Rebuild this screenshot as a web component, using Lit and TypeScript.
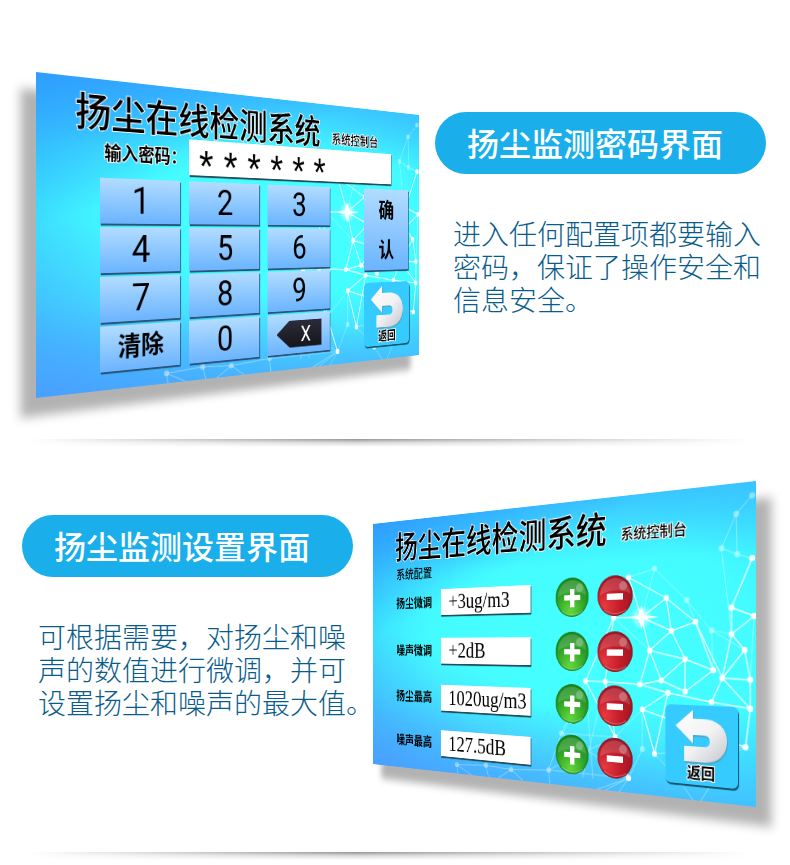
import { LitElement, html, svg, css } from "lit";
import { customElement, property } from "lit/decorators.js";

type Point = [number, number];

const NODES: Point[] = [
  [398, 90], [430, 82], [444, 114], [468, 117], [414, 134], [379, 134], [450, 149], [478, 140],
  [496, 149], [424, 170], [540, 77], [518, 126], [542, 135], [518, 153], [532, 169], [523, 31],
  [540, 14], [507, 65], [524, 72], [466, 179], [498, 190], [508, 198], [538, 199], [438, 202],
  [466, 213], [412, 207], [368, 205], [342, 205], [446, 215], [415, 234], [496, 223], [538, 228],
  [430, 281], [533, 267], [381, 266], [398, 310], [415, 277], [461, 309], [150, 315], [197, 312],
  [236, 314], [291, 310], [309, 266],
];
const DIM = new Set([1, 3, 8, 15, 16, 17, 18, 36, 38, 39, 40, 41, 42]);
const BRIGHT_EDGES: Point[] = [
  [0, 2], [0, 4], [2, 4], [2, 6], [2, 7], [4, 5], [4, 6], [4, 9], [6, 7], [6, 9], [6, 19], [7, 20],
  [9, 19], [19, 20], [9, 23], [19, 23], [20, 24], [19, 24], [23, 24], [23, 25], [5, 27], [5, 26],
  [10, 11], [11, 12], [11, 13], [13, 12], [13, 14], [13, 21], [14, 21], [14, 22], [21, 22], [21, 30],
  [21, 31], [22, 31], [28, 29], [28, 30], [30, 31], [29, 32], [28, 32], [26, 34], [27, 26], [26, 25],
  [34, 35], [34, 27], [31, 33], [29, 33], [25, 28], [7, 21], [9, 25],
];
const DIM_EDGES: Point[] = [
  [1, 0], [1, 3], [3, 7], [8, 13], [8, 14], [15, 16], [15, 17], [15, 18], [17, 18], [3, 8], [5, 9],
  [8, 20], [29, 36], [36, 35], [32, 37], [37, 33], [34, 29], [41, 34], [38, 39], [39, 40], [40, 41],
  [41, 42], [42, 27], [41, 35], [42, 34], [1, 4], [17, 13], [10, 18], [12, 22], [33, 32], [35, 42],
];

const segment = ([a, b]: Point) =>
  svg`<line x1=${NODES[a][0]} y1=${NODES[a][1]} x2=${NODES[b][0]} y2=${NODES[b][1]}></line>`;

const network = html`
  <svg class="network" viewBox="0 0 544 326" preserveAspectRatio="none" aria-hidden="true">
    <defs>
      <radialGradient id="glow">
        <stop offset="0" stop-color="#fff"></stop>
        <stop offset="0.3" stop-color="#fff" stop-opacity="0.6"></stop>
        <stop offset="1" stop-color="#fff" stop-opacity="0"></stop>
      </radialGradient>
    </defs>
    <g stroke="#fff" stroke-width="1" opacity="0.4">
      ${DIM_EDGES.map(segment)}
      <path d="M150 315l24 11M150 315l2 11M197 312l4 14M236 314l18 12M236 314l-20 12M291 310l2 16M398 310l-40 16M398 310l-30 16M398 310l-12 16M461 309l14 17M498 304l-14 22M342 205l-30 60M342 205l10 110M368 205l-30 110" fill="none"></path>
    </g>
    <g stroke="#fff" stroke-width="1.4" opacity="0.85">${BRIGHT_EDGES.map(segment)}</g>
    <g fill="#fff">
      ${NODES.map(([x, y], i) => svg`<circle cx=${x} cy=${y} r="3.2" opacity=${DIM.has(i) ? 0.4 : 0.95}></circle>`)}
    </g>
    <circle cx="414" cy="134" r="14" fill="url(#glow)"></circle>
    <path d="M394 134l16-2 4-10 4 10 18 2-18 2-4 10-4-10z" fill="#fff"></path>
  </svg>
`;

const panelText = css`
  * { box-sizing: border-box; }
  button, input { margin: 0; border: 0; font: inherit; color: inherit; }
  button { padding: 0; cursor: pointer; }
`;

/** Console screen drawn as a tilted board; its content sits in the default slot. */
@customElement("console-screen")
export class ConsoleScreen extends LitElement {
  @property({ reflect: true }) tilt: "left" | "right" = "left";

  static styles = [
    panelText,
    css`
      :host { display: flex; width: 383px; height: 326px; }
      :host([tilt="right"]) { justify-content: flex-end; }
      .board {
        position: relative;
        flex: none;
        width: 544px;
        height: 326px;
        transform-origin: left center;
        transform: perspective(444px) rotateY(17deg);
        box-shadow: -16px 18px 10px rgb(0 0 0 / 0.3);
        outline: 1px solid transparent;
        background:
          linear-gradient(160deg, rgb(44 150 255 / 0.8), rgb(50 180 255 / 0) 30%),
          linear-gradient(to bottom, rgb(56 180 255 / 0.65), rgb(50 200 255 / 0) 22%),
          radial-gradient(ellipse 84% 80% at 60% 50%, #46ffff 0, #44fcff 48%, #3adcff 80%, #38d0ff 100%);
        color: #000;
      }
      :host([tilt="right"]) .board {
        transform-origin: right center;
        transform: perspective(444px) rotateY(-17deg);
        box-shadow: 16px 18px 10px rgb(0 0 0 / 0.3);
      }
      .board::before {
        content: "";
        position: absolute;
        inset: 0;
        background:
          linear-gradient(20deg, rgb(76 150 255 / 0.75), rgb(74 180 255 / 0) 38%),
          linear-gradient(to top, rgb(70 176 255 / 0.6), rgb(74 200 255 / 0) 28%);
      }
      .network { position: absolute; inset: 0; width: 100%; height: 100%; }
      .content { position: relative; height: 100%; }
      header { display: flex; align-items: center; gap: 18px; padding: 8px 0 0 42px; }
      h3, p { margin: 0; font-weight: 500; -webkit-text-stroke: 2px #fff; paint-order: stroke fill; }
      h3 { font-size: 41px; line-height: 48px; }
      p { padding-top: 18px; font-size: 16px; line-height: 20px; }
    `,
  ];

  render() {
    return html`
      <div class="board">
        ${network}
        <div class="content">
          <header>
            <h3>扬尘在线检测系统</h3>
            <p>系统控制台</p>
          </header>
          <slot></slot>
        </div>
      </div>
    `;
  }
}

@customElement("return-button")
export class ReturnButton extends LitElement {
  static styles = [
    panelText,
    css`
      :host { display: block; }
      button {
        display: flex;
        flex-direction: column;
        align-items: center;
        width: 82px;
        height: 83px;
        padding-top: 5px;
        border-radius: 6px;
        background: #36cbff;
        box-shadow: 1px 2px 1px #17506a;
      }
      svg { display: block; width: 62px; height: 56px; }
      span {
        font-size: 16px;
        font-weight: 700;
        line-height: 16px;
        -webkit-text-stroke: 2px #fff;
        paint-order: stroke fill;
      }
    `,
  ];

  render() {
    return html`
      <button type="button">
        <svg viewBox="0 0 62 56" aria-hidden="true">
          <defs>
            <linearGradient id="metal" x1="0" y1="0" x2="1" y2="1">
              <stop offset="0" stop-color="#fff"></stop>
              <stop offset="0.55" stop-color="#f2f2f4"></stop>
              <stop offset="1" stop-color="#c4c6cc"></stop>
            </linearGradient>
          </defs>
          <path d="M3 18L22 1v9h12c17 0 26 9 26 22S51 55 34 55H12V39h22c5 0 7-2 7-6s-2-6-7-6H22v9z" transform="translate(1 1)" fill="#6b8b98" opacity="0.5"></path>
          <path d="M2 17L22 0v9h12c17 0 26 9 26 22S51 54 34 54H12V38h22c5 0 7-2 7-6s-2-6-7-6H22v9z" fill="url(#metal)"></path>
        </svg>
        <span>返回</span>
      </button>
    `;
  }
}

@customElement("password-pad")
export class PasswordPad extends LitElement {
  static styles = [
    panelText,
    css`
      :host { display: block; }
      .entry { display: flex; align-items: center; padding-left: 75px; }
      label {
        width: 104px;
        font-size: 20px;
        font-weight: 700;
        line-height: 40px;
        -webkit-text-stroke: 2px #fff;
        paint-order: stroke fill;
        white-space: nowrap;
      }
      input {
        width: 312px;
        height: 40px;
        padding: 20px 0 0 13px;
        background: #fff;
        box-shadow: 1px 2px 1px #205060;
        font-family: "Liberation Sans", sans-serif;
        font-size: 50px;
      }
      .keys { display: flex; padding: 7px 0 0 70px; }
      .pad { display: grid; grid-template-columns: repeat(3, 97px); grid-auto-rows: 48px; gap: 4px 12px; }
      .key {
        display: grid;
        place-items: center;
        background: linear-gradient(#b2dcff, #6bb4ff);
        box-shadow: 1px 2px 1px #2a5578;
        font-family: Roboto, "Noto Sans CJK SC", sans-serif;
        font-size: 40px;
        line-height: 48px;
      }
      .word { font-size: 28px; font-weight: 700; }
      .erase {
        width: 70px;
        height: 33px;
        padding-left: 20px;
        background: linear-gradient(#2c2b3a, #15151c);
        clip-path: polygon(0 50%, 20px 0, 100% 0, 100% 100%, 20px 100%);
        color: #fff;
        font-size: 26px;
        line-height: 34px;
      }
      .side { display: flex; flex-direction: column; gap: 16px; padding-left: 58px; }
      .confirm { width: 80px; height: 106px; padding: 3px 26px 0; line-height: 52px; }
    `,
  ];

  render() {
    return html`
      <div class="entry">
        <label for="code">输入密码：</label>
        <input id="code" value="* * * * * *" />
      </div>
      <div class="keys">
        <div class="pad">
          ${[1, 2, 3, 4, 5, 6, 7, 8, 9].map((n) => html`<button class="key" type="button">${n}</button>`)}
          <button class="key word" type="button">清除</button>
          <button class="key" type="button">0</button>
          <button class="key" type="button"><span class="erase">X</span></button>
        </div>
        <div class="side">
          <button class="key word confirm" type="button">确认</button>
          <return-button></return-button>
        </div>
      </div>
    `;
  }
}

const SETTINGS = [
  { id: "dust-trim", label: "扬尘微调", value: "+3ug/m3" },
  { id: "noise-trim", label: "噪声微调", value: "+2dB" },
  { id: "dust-max", label: "扬尘最高", value: "1020ug/m3" },
  { id: "noise-max", label: "噪声最高", value: "127.5dB" },
];

@customElement("settings-form")
export class SettingsForm extends LitElement {
  static styles = [
    panelText,
    css`
      :host { display: block; padding-left: 44px; }
      h4, label { margin: 0; font-size: 16px; font-weight: 700; }
      h4 { line-height: 24px; padding-top: 2px; font-weight: 500; }
      .body { display: flex; align-items: flex-end; padding-top: 5px; }
      .rows { display: grid; grid-template-rows: 62px 60px 58px 34px; width: 399px; }
      .row { display: grid; grid-template-columns: 79px 142px 36px 45px 12px 45px; align-items: center; height: 34px; }
      label { padding-bottom: 4px; line-height: 28px; }
      input {
        width: 142px;
        height: 33px;
        padding: 0 0 0 13px;
        background: #fff;
        box-shadow: 1px 2px 1px #205060;
        font-family: "Liberation Serif", serif;
        font-size: 27px;
      }
      .step { width: 45px; height: 45px; border-radius: 50%; }
      .step svg { display: block; width: 100%; height: 100%; }
      .plus { grid-column: 4; background: radial-gradient(circle at 45% 85%, #62d83c, #2a9e26 50%, #137a1c); box-shadow: inset 0 0 2px 1px #187a20; }
      .minus { grid-column: 6; background: radial-gradient(circle at 20% 75%, #e83a40, #c01a28 45%, #8c1420); box-shadow: inset 0 0 2px 1px #7c1820; }
      return-button { margin: 0 0 -9px; }
    `,
  ];

  private step(kind: "plus" | "minus", label: string) {
    return html`
      <button class="step ${kind}" type="button" aria-label="${label} ${kind === "plus" ? "+" : "−"}">
        <svg viewBox="0 0 45 45" aria-hidden="true">
          <path d="M3 22C4 10 12 3 23 3s19 8 19 18C32 15 14 15 3 22z" fill="#fff" opacity="0.16"></path>
          <circle cx="33" cy="12" r="5" fill="#fff" opacity="0.25"></circle>
          <path d="M9 38c8 6 20 6 28 0" fill="none" stroke="#fff" opacity="0.35"></path>
          <path d=${kind === "plus" ? "M20 13h6v7h8v6h-8v8h-6v-8h-8v-6h8z" : "M12 20h21v7H12z"} fill="#fff"></path>
        </svg>
      </button>
    `;
  }

  render() {
    return html`
      <h4>系统配置</h4>
      <div class="body">
        <div class="rows">
          ${SETTINGS.map(
            (s) => html`
              <div class="row">
                <label for=${s.id}>${s.label}</label>
                <input id=${s.id} .value=${s.value} />
                ${this.step("plus", s.label)} ${this.step("minus", s.label)}
              </div>
            `,
          )}
        </div>
        <return-button></return-button>
      </div>
    `;
  }
}

@customElement("app-root")
export class AppRoot extends LitElement {
  static styles = css`
    :host {
      display: block;
      background: #fff;
      font-family: "Noto Sans CJK SC", sans-serif;
    }
    * { box-sizing: border-box; }
    section { display: grid; }
    .password { grid-template-columns: 383px 1fr; gap: 16px; padding: 72px 24px 0 36px; }
    .settings { grid-template-columns: 1fr 383px; gap: 20px; padding: 34px 34px 4px 22px; }
    .copy { min-width: 0; padding-top: 40px; }
    .settings .copy { padding-top: 34px; }
    h2 {
      margin: 0;
      padding: 0 0 2px 32px;
      max-width: 331px;
      border-radius: 31px;
      background: #1aaeea;
      color: #fff;
      font-size: 32px;
      font-weight: 500;
      line-height: 60px;
      white-space: nowrap;
    }
    .copy p {
      margin: 0;
      padding: 43px 0 0 18px;
      color: #0a5c8a;
      font-size: 28px;
      font-weight: 300;
      line-height: 33px;
      white-space: nowrap;
    }
    .settings .copy p { padding-left: 16px; }
    hr {
      height: 8px;
      margin: 41px 40px 0 30px;
      border: 0;
      background:
        linear-gradient(to right, #fff, rgb(255 255 255 / 0) 45%, #fff),
        linear-gradient(#939393, #d8d8d8 45%, #fff);
    }
  `;

  render() {
    return html`
      <main>
        <section class="password">
          <console-screen tilt="left"><password-pad></password-pad></console-screen>
          <div class="copy">
            <h2>扬尘监测密码界面</h2>
            <p>进入任何配置项都要输入<br />密码，保证了操作安全和<br />信息安全。</p>
          </div>
        </section>
        <hr />
        <section class="settings">
          <div class="copy">
            <h2>扬尘监测设置界面</h2>
            <p>可根据需要，对扬尘和噪<br />声的数值进行微调，并可<br />设置扬尘和噪声的最大值。</p>
          </div>
          <console-screen tilt="right"><settings-form></settings-form></console-screen>
        </section>
        <hr />
      </main>
    `;
  }
}
